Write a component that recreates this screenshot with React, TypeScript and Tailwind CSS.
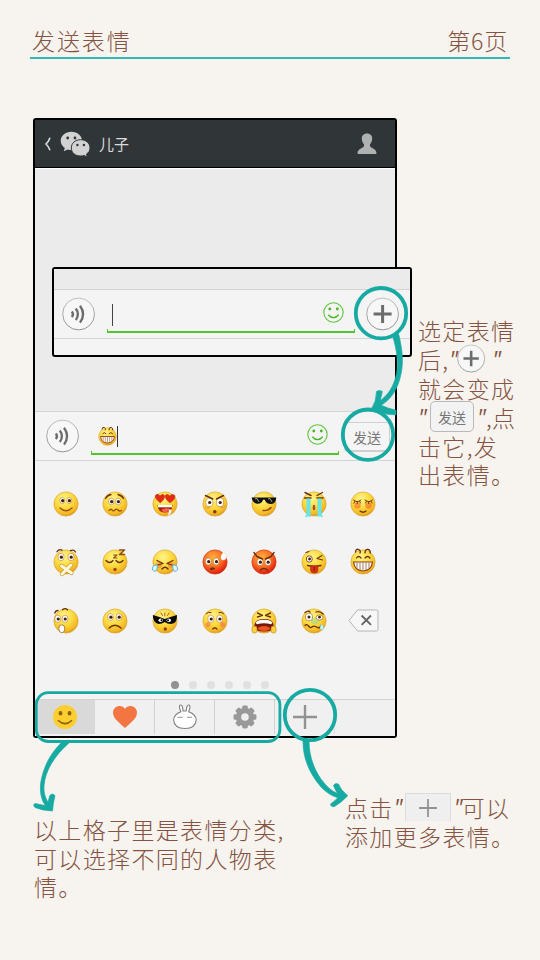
import React from "react";

const TEAL = "#17aaa3";

/* ---------- Emoji faces, drawn on a 26x26 grid ---------- */

type FaceProps = { name: string; size?: number };

const Eyes = ({ x1 = 9.3, x2 = 16.2, y = 10, r = 2.5 }) => (
  <g>
    <ellipse cx={x1} cy={y} rx={r} ry={r * 1.2} fill="#fff" stroke="#a8651a" strokeWidth="0.5" />
    <ellipse cx={x2} cy={y} rx={r} ry={r * 1.2} fill="#fff" stroke="#a8651a" strokeWidth="0.5" />
    <circle cx={x1 + 0.4} cy={y + 0.2} r="1.6" fill="#45200c" />
    <circle cx={x2 + 0.2} cy={y + 0.2} r="1.6" fill="#45200c" />
  </g>
);

const L = ({ d, c = "#6b2f0c", w = 1.3 }: { d: string; c?: string; w?: number }) => (
  <path d={d} fill="none" stroke={c} strokeWidth={w} strokeLinecap="round" strokeLinejoin="round" />
);

const features: Record<string, React.ReactNode> = {
  smile: (
    <>
      <Eyes y={9.5} />
      <L d="M7 17 Q13 22.5 19 17" c="#a04d10" w={1.2} />
    </>
  ),
  upset: (
    <>
      <Eyes y={10.5} r={2.8} />
      <L d="M3.5 7.5 Q5.5 4 9 3.5M16 3.5 Q20 4.5 21.5 7.5" />
      <L d="M7 19.5 Q8.5 17.3 10 19 T13 19 T16 19 T19.5 19.5" c="#a04d10" />
    </>
  ),
  love: (
    <>
      <path d="M8.2 11.8C-1 5 5 0.8 8 5C12 0.8 16 6 8.2 11.8Z" fill="#e42b17" stroke="#b01508" strokeWidth=".4" />
      <path d="M18 11.8C10 6 13.5 0.8 17.8 5C22 0.8 27 6 18 11.8Z" fill="#e42b17" stroke="#b01508" strokeWidth=".4" />
      <path d="M5.5 14H20.5Q20 21.5 13 21.5Q6 21.5 5.5 14Z" fill="#a3200b" />
      <path d="M6 14H20V16.3H6Z" fill="#fff" />
      <path d="M9 19Q14 16 18 18Q15.5 21.5 12 21.5Z" fill="#f4644c" />
      <path d="M17 18.5Q19.5 18 19.5 20Q19 24 15.5 25.2Q17 22 17 18.5Z" fill="#fff" stroke="#f3a15e" strokeWidth=".4" />
    </>
  ),
  stare: (
    <>
      <Eyes x1={7.3} x2={18} y={11.3} r={3.6} />
      <L d="M3.5 4.5L10.8 8M14.5 8L21.5 4.5" w={1.5} />
      <path d="M3 15.5Q5 18.5 8 16.5M19 16.5Q22 17.5 23 14.5" fill="none" stroke="#f28a43" strokeWidth="1" />
      <circle cx="12.8" cy="20.8" r="1.8" fill="#8a3510" />
    </>
  ),
  cool: (
    <>
      <path d="M.5 6.5H25.3Q25 12.8 20.2 13Q15 13 13.8 8.8H12Q11 13 6 12.8Q2 12 .5 6.5Z" fill="#101010" />
      <path d="M4 8L6 7.5L8 11M17 8L19 7.5L21 11" stroke="#d9e4e4" strokeWidth=".7" fill="none" />
      <L d="M12 19.5Q17 20 20 16.5" c="#8b410e" />
    </>
  ),
  cry: (
    <>
      <L d="M4 1.5L10 4.5M16 4.5L21.5 1.5M3.5 7H10M16 7H22" w={1.4} />
      <path d="M5.5 7.5H9.5V26Q7 25 4 26.5L5.5 22ZM16.5 7.5H20.5V22L22 26.5Q19 25 16.5 26Z" fill="#66e6ea" />
      <ellipse cx="13" cy="16.5" rx="1.3" ry="2.8" fill="#8b410e" />
      <path d="M13 15V18" stroke="#df8850" strokeWidth=".7" />
    </>
  ),
  shy: (
    <>
      <circle cx="7.5" cy="14.5" r="3.2" fill="#f4672c" opacity=".6" />
      <circle cx="18.5" cy="14.5" r="3.2" fill="#f4672c" opacity=".6" />
      <L d="M3.5 9Q7 12.5 11 9M15 9Q19 12.5 22.5 9M5 10L4 12.3M7.3 10.5V12.6M9.5 10L10.5 12M16.5 10L15.5 12M18.7 10.5V12.6M21 10L22 12" w={0.9} />
      <L d="M10 20Q13 22.5 16 20" />
    </>
  ),
  shut: (
    <>
      <Eyes x1={8} x2={18} y={8} r={3.1} />
      <L d="M4 2.7Q6 -.3 9 1.2M17.5 1.7Q21 .2 22.5 3" />
      <L d="M8.5 17L18.5 24M18 16L9 25" c="#c6952e" w={4.2} />
      <L d="M8.5 17L18.5 24M18 16L9 25" c="#fff9dc" w={3} />
    </>
  ),
  sleep: (
    <>
      <L d="M4 11.5Q7.5 15.5 11 11.5M14 11.5Q17.5 15.5 21 11.5" />
      <L d="M11.5 6H15L11.5 9H15" c="#91500e" w={1.1} />
      <L d="M17.5 1H22.5L17.5 5.5H22.5" c="#91500e" w={1.5} />
      <circle cx="13" cy="20.5" r="1.7" fill="#a04310" />
    </>
  ),
  sob: (
    <>
      <circle cx="7" cy="16" r="3" fill="#f27234" opacity=".5" />
      <circle cx="19" cy="16" r="3" fill="#f27234" opacity=".5" />
      <L d="M5 11.5L11 14.5L6 16M21 11.5L15 14.5L20 16" />
      <L d="M10 20Q13 16.5 16 20" w={1.5} />
      <path d="M5.5 16C1 16 0 18 .5 21Q3.5 24 5 20ZM20.5 16C25 16 26 18 25.5 21Q22.5 24 21 20Z" fill="#dff7ff" stroke="#45abd9" strokeWidth=".9" />
    </>
  ),
  awkward: (
    <>
      <Eyes x1={6.3} x2={14.3} y={12.5} r={2.9} />
      <L d="M8.5 20Q10.5 18 12.5 19.5Q10.5 21 8.5 20" w={1.4} />
      <path d="M21.3 3C17.5 8 18.5 11.5 22 11C25.5 10 25 6.5 21.3 3Z" fill="#fff" stroke="#ffd9ba" strokeWidth=".4" />
    </>
  ),
  angry: (
    <>
      <Eyes x1={9} x2={17} y={13} r={3} />
      <L d="M3 3.5L6 7.5L11.5 10M14.5 10L20 7.5L23 3.5" w={1.4} />
      <L d="M9.5 21Q13 18 16.5 21" w={1.5} />
    </>
  ),
  tongue: (
    <>
      <ellipse cx="8.3" cy="10" rx="3" ry="3.2" fill="#fff" stroke="#94530f" />
      <circle cx="8.6" cy="10" r="1.4" fill="#45200c" />
      <L d="M21 6.5L16 9.5L21.5 11M5 3.5L8 2.5" w={1.1} />
      <L d="M6.5 16.5Q13 18 20 16.5" />
      <path d="M9.5 17H17V21Q16.5 24.5 13.3 24Q9.7 24 9.5 21Z" fill="#d7311b" stroke="#a51b0b" strokeWidth=".5" />
      <L d="M13.2 18V21.5" c="#8d120a" w={1} />
    </>
  ),
  grin: (
    <>
      <L d="M5.5 3Q6 -1 9 .8Q11 2 10 4M15 4Q15 0 18 .4Q20.5 1 20.3 4" w={1.3} />
      <L d="M6.5 9Q8.5 6 11 9M15 9Q17.5 6 20 9" />
      <path d="M3.5 13H22.5Q21.5 21.5 13 22Q4.5 21.5 3.5 13Z" fill="#fff" stroke="#8b3c0c" strokeWidth="1.2" />
      <path d="M7 13.5V18.8M10 13.5V21M13 13.5V21.5M16 13.5V21M19 13.5V18.8" stroke="#9a6747" strokeWidth=".9" />
    </>
  ),
  scared: (
    <>
      <Eyes x1={4.8} x2={12} y={10.8} r={3} />
      <L d="M1.8 5Q2.5 2.5 5 2.5M9.5 1.7Q12 -.5 14.5 1.8" />
      <ellipse cx="8.8" cy="20.7" rx="3" ry="4" fill="#fff" stroke="#9b6519" strokeWidth=".8" />
    </>
  ),
  sad: (
    <>
      <Eyes x1={8.5} x2={17} y={9} r={2.9} />
      <L d="M7 20Q13 14.5 19 20" />
    </>
  ),
  masked: (
    <>
      <path d="M.8 7Q8 9 12.8 11Q18 9 25 7Q25.3 15.5 19 16Q15 16 12.8 14Q10 16 6.5 16Q.7 14.5 .8 7Z" fill="#0a0a0a" />
      <ellipse cx="8.7" cy="12.2" rx="2.2" ry="1.8" fill="#fff" />
      <ellipse cx="16.8" cy="12.2" rx="2.2" ry="1.8" fill="#fff" />
      <circle cx="9.5" cy="12.2" r="1" />
      <circle cx="16" cy="12.2" r="1" />
      <L d="M12.8 5V8M9 5L10.5 7.5M17 5L15.5 7.5" c="#b45a13" w={1} />
      <circle cx="13.3" cy="21" r="1.7" fill="#943c0e" />
    </>
  ),
  hurt: (
    <>
      <circle cx="6" cy="16.6" r="2.6" fill="#f4704f" opacity=".6" />
      <circle cx="20.6" cy="16.6" r="2.6" fill="#f4704f" opacity=".6" />
      <Eyes x1={8.8} x2={17.7} y={10.8} r={3.1} />
      <L d="M4.5 5.5Q6.5 3.5 9 4.5M17 4.5Q19.5 3.5 21.5 5.5" w={1} />
      <L d="M10.8 21Q12.8 18.8 14.8 21" />
    </>
  ),
  mad: (
    <>
      <L d="M6.5 5L11.5 7.3L6.5 9M19.5 5L14.5 7.3L19.5 9" w={1.4} />
      <path d="M4 15Q5.5 11 13 11Q21 11 22 15L23 19Q21 23.5 13 23.5Q4.5 23.5 3 19Z" fill="#73180a" />
      <path d="M4.5 14.8Q6 11.8 13 11.8Q20 11.8 21.5 14.8L20 16.3Q13 14 6 16.3Z" fill="#fff" />
      <ellipse cx="13" cy="20.5" rx="6" ry="2.5" fill="#ee5221" />
      <rect x="1" y="18" width="5" height="7" rx="2.3" fill="#ffd139" stroke="#c17916" strokeWidth=".6" />
      <rect x="20" y="18" width="5" height="7" rx="2.3" fill="#ffd139" stroke="#c17916" strokeWidth=".6" />
    </>
  ),
  sick: (
    <>
      <ellipse cx="14" cy="13" rx="4" ry="3.5" fill="#9bd68c" opacity=".55" />
      <ellipse cx="8" cy="9" rx="3.7" ry="3.9" fill="#fff" stroke="#8d561a" strokeWidth=".6" />
      <ellipse cx="18.5" cy="9.5" rx="3.4" ry="2.6" fill="#fff" stroke="#8d561a" strokeWidth=".6" />
      <circle cx="8" cy="9" r="1.5" fill="#45200c" />
      <circle cx="18.5" cy="9.2" r="1.4" fill="#45200c" />
      <L d="M4 4.5Q7 2 9 4M15 4Q18.5 2.5 22 6" />
      <L d="M4 17.5Q5.5 15.5 7.5 18T11 19T14.5 18.5T18 20L20 18" />
      <path d="M20.5 16C18 20 19 22 21 21.5C23.5 21 23 18.5 20.5 16Z" fill="#c5fbff" stroke="#49b8cc" strokeWidth=".4" />
    </>
  ),
};

const RED = ["awkward", "angry"];

function Face({ name, size = 26 }: FaceProps) {
  return (
    <svg width={size} height={size} viewBox="0 0 26 26" className="block overflow-visible">
      <circle
        cx="13"
        cy="13"
        r="12.1"
        fill={RED.includes(name) ? "url(#redFace)" : "url(#yellowFace)"}
        stroke={RED.includes(name) ? "#d33a13" : "#dda73a"}
        strokeWidth=".7"
      />
      {features[name]}
    </svg>
  );
}

/* ---------- Small icons ---------- */

const Gradients = () => (
  <defs>
    <radialGradient id="yellowFace" cx=".42" cy=".3" r=".75">
      <stop offset="0" stopColor="#fff58c" />
      <stop offset=".5" stopColor="#fbd93c" />
      <stop offset=".82" stopColor="#f2b624" />
      <stop offset="1" stopColor="#d08817" />
    </radialGradient>
    <radialGradient id="redFace" cx=".42" cy=".32" r=".72">
      <stop offset="0" stopColor="#ffb03a" />
      <stop offset=".5" stopColor="#fb7327" />
      <stop offset=".85" stopColor="#e92b10" />
      <stop offset="1" stopColor="#b91a08" />
    </radialGradient>
    <linearGradient id="ring" x1="0" y1="0" x2="0" y2="1">
      <stop offset="0" stopColor="#bdbdbd" />
      <stop offset="1" stopColor="#909090" />
    </linearGradient>
  </defs>
);

const Voice = () => (
  <svg width="34" height="34" viewBox="0 0 34 34" className="-mt-px block shrink-0">
    <circle cx="16.6" cy="17" r="15.9" fill="#f7f7f7" stroke="url(#ring)" strokeWidth="1" />
    <g fill="none" stroke="#6c6c6c" strokeWidth="2.3">
      <path d="M9.8 14.5Q12.2 17.2 9.8 20" />
      <path d="M13.8 11.5Q18 17.2 13.8 23" />
      <path d="M18 8.8Q24.2 17.2 18 25.6" />
    </g>
  </svg>
);

const PlusCircle = ({ size = 34 }: { size?: number }) => (
  <svg width={size} height={size} viewBox="0 0 34 34" className="-mt-px block shrink-0">
    <circle cx="16.6" cy="17" r="15.9" fill="#f7f7f7" stroke="url(#ring)" strokeWidth="1" />
    <path d="M16.6 8V26M7.6 17H25.6" stroke="#6c6c6c" strokeWidth="3" />
  </svg>
);

const GreenSmile = () => (
  <svg width="22" height="22" viewBox="0 0 22 22" className="block">
    <circle cx="10.5" cy="10.5" r="9.7" fill="none" stroke="#5cc63d" strokeWidth="1.1" />
    <circle cx="6.8" cy="7" r="1.4" fill="#43b822" />
    <circle cx="14.3" cy="7" r="1.4" fill="#43b822" />
    <path d="M5.3 12.7Q10.5 18.7 15.7 12.7" fill="none" stroke="#43b822" strokeWidth="1.3" />
  </svg>
);

function Field({ children }: { children: React.ReactNode }) {
  return (
    <div className="relative flex h-[34px] w-[248px] shrink-0 items-center">
      {children}
      <div className="absolute inset-x-0 bottom-0 h-1 border-x border-b-2 border-[#50c72e]" />
    </div>
  );
}

const Plus = ({ size, w }: { size: number; w: number }) => (
  <svg width={size} height={size} viewBox="0 0 24 24" className="block">
    <path d="M12 0V24M0 12H24" stroke="#929292" strokeWidth={w} />
  </svg>
);

const Gear = () => (
  <svg width="24" height="24" viewBox="-12 -12 24 24" className="block">
    <g fill="#999">
      {[0, 45, 90, 135].map((a) => (
        <rect key={a} x="-2.8" y="-11.4" width="5.6" height="22.8" rx="1.4" transform={`rotate(${a})`} />
      ))}
      <circle r="9.2" />
    </g>
    <circle r="3.8" fill="#efefef" />
  </svg>
);

const Rabbit = () => (
  <svg width="26" height="26" viewBox="0 0 26 26" className="-mt-px block">
    <g fill="#fff" stroke="#808080" strokeWidth="1.1">
      <path d="M8.8 7.8Q6.5 1.5 8.3 1Q10.8 .5 11 7H14.2Q14.6 .3 17 1Q19 1.6 16.7 7.8Q24 10.5 24.2 16Q23.6 24.4 13 24.5Q2.2 24.4 1.6 16Q2 10.5 8.8 7.8Z" />
      <path d="M5.5 13.3H10.5M15 13.3H20" stroke="#aaa" strokeWidth="1.2" />
    </g>
  </svg>
);

const rows = [
  ["smile", "upset", "love", "stare", "cool", "cry", "shy"],
  ["shut", "sleep", "sob", "awkward", "angry", "tongue", "grin"],
  ["scared", "sad", "masked", "hurt", "mad", "sick", "delete"],
];

const Delete = () => (
  <svg width="31" height="23" viewBox="0 0 31 23" className="block">
    <path d="M1 11.5L9.5 1H28.5Q30 1 30 2.5V20.5Q30 22 28.5 22H9.5Z" fill="#f7f7f7" stroke="#b5b5b5" />
    <path d="M13.6 6.5L23 15.9M23 6.5L13.6 15.9" stroke="#666" strokeWidth="1.9" />
  </svg>
);

/* Straight slanted quotation mark */
const Q = ({ className }: { className: string }) => (
  <span className={`inline-block shrink-0 font-['Open_Sans'] font-normal italic tracking-normal ${className}`}>"</span>
);

const Line = ({ children }: { children: React.ReactNode }) => (
  <div className="flex h-[28.8px] items-center leading-[28px] whitespace-nowrap">{children}</div>
);

function Phone() {
  return (
    <section className="flex h-[620px] w-[364px] shrink-0 flex-col rounded-[3px] border-2 border-black bg-[#ebebeb]">
      <header className="flex h-12 shrink-0 items-center border-b border-black bg-[#303538] pr-[18px] pl-[9px]">
        <svg width="8" height="14" viewBox="0 0 8 14">
          <path d="M6 .7Q4.5 4.8 2 7Q4.5 9.2 6 13.3" fill="none" stroke="#ddd" strokeWidth="1.6" />
        </svg>
        <svg width="31" height="26" viewBox="0 0 31 26" className="ml-2">
          <path d="M11.5 .7C5.3 .7 .7 4.7 .7 9.8C.7 12.7 2.3 15.2 4.8 17L3.8 20.3L7.8 18.4Q9.5 19 11.5 19C17.5 19 22 15 22 9.8C22 4.7 17.5 .7 11.5 .7Z" fill="#d2d2d2" />
          <path d="M20.6 8.7C15.2 8.7 11.3 12.2 11.3 17C11.3 21.7 15.2 25 20.6 25Q22.3 25 24 24.5L27.3 26L26.5 23.1C28.8 21.6 30 19.5 30 17C30 12.2 26 8.7 20.6 8.7Z" fill="#d2d2d2" stroke="#303538" strokeWidth="1" />
          <g fill="#303538">
            <circle cx="7.7" cy="7" r="1.4" />
            <circle cx="15" cy="7" r="1.4" />
            <circle cx="17.4" cy="14" r="1.2" />
            <circle cx="23.9" cy="14" r="1.2" />
          </g>
        </svg>
        <span className="ml-2 text-[15px] leading-none font-normal tracking-normal text-[#dcdcdc]">儿子</span>
        <svg width="20" height="22" viewBox="0 0 20 22" className="ml-auto">
          <path d="M10 .5C13.4 .5 15.4 2.8 15.2 5.8C15 8.6 14.2 10 13 11.3V13C13.7 15.3 19.5 15.5 19.5 20.2Q19.5 21 18.7 21H1.3Q.5 21 .5 20.2C.5 15.5 6.3 15.3 7 13V11.3C5.8 10 5 8.6 4.8 5.8C4.6 2.8 6.6 .5 10 .5Z" fill="#b0b2b2" />
        </svg>
      </header>

      <div className="h-[243px] shrink-0 border-t border-white" />

      <div className="flex h-[50px] shrink-0 items-center border-y border-[#d4d4d4] bg-[#f4f4f4] pl-[11px]">
        <Voice />
        <div className="ml-[11px] pt-1">
          <Field>
            <div className="-mt-[3px] ml-[7px]">
              <Face name="grin" size={19} />
            </div>
            <div className="-mt-1 h-[21px] w-px bg-[#333]" />
            <div className="-mt-1.5 mr-2.5 ml-auto">
              <GreenSmile />
            </div>
          </Field>
        </div>
        <div className="mt-0.5 ml-[5px] flex h-[30px] w-[46px] items-center justify-center rounded-[4px] border border-b-2 border-[#cfcfcf] bg-[#f5f5f5] text-sm leading-none font-normal tracking-normal text-[#777]">
          发送
        </div>
      </div>

      <div className="flex grow flex-col bg-[#f3f3f3] pt-[13.5px]">
        {rows.map((row, i) => (
          <div key={i} className="flex h-[58.6px] shrink-0 items-center pl-[6px]">
            {row.map((name) => (
              <div key={name} className="flex w-[49.6px] shrink-0 justify-center">
                {name === "delete" ? <Delete /> : <Face name={name} />}
              </div>
            ))}
          </div>
        ))}
        <div className="mt-[30.5px] flex justify-center gap-2.5 pl-[9px]">
          {[0, 1, 2, 3, 4, 5].map((i) => (
            <span key={i} className={`size-2 rounded-full ${i === 0 ? "bg-[#929292]" : "bg-[#e0e0e0]"}`} />
          ))}
        </div>
      </div>

      <nav className="flex h-[37px] shrink-0 border-t border-[#d2d2d2] bg-[#f0f0f0] pb-0.5">
        <div className="flex w-[60px] items-center justify-center bg-[#d9d9d9]">
          <svg width="24" height="24" viewBox="0 0 24 24">
            <circle cx="12" cy="12" r="12" fill="#fdce2f" />
            <ellipse cx="7.5" cy="8.2" rx="1.9" ry="2.3" fill="#876313" />
            <ellipse cx="16.5" cy="8.2" rx="1.9" ry="2.3" fill="#876313" />
            <path d="M5 15.2Q12 22 19 15.2" fill="none" stroke="#876313" strokeWidth="1.6" />
          </svg>
        </div>
        <div className="flex w-[60px] items-center justify-center border-r border-[#d2d2d2]">
          <svg width="24" height="22" viewBox="0 0 24 22">
            <path d="M12 22C7 17 0 13 0 6.5C0 .5 8.5 -2.5 12 3C15.5 -2.5 24 .5 24 6.5C24 13 17 17 12 22Z" fill="#f37542" />
          </svg>
        </div>
        <div className="flex w-[60px] items-center justify-center border-r border-[#d2d2d2]">
          <Rabbit />
        </div>
        <div className="flex w-[60px] items-center justify-center border-r border-[#d2d2d2]">
          <Gear />
        </div>
        <div className="flex w-[60px] items-center justify-center border-r border-[#dedede]">
          <Plus size={24} w={2.4} />
        </div>
      </nav>
    </section>
  );
}

/* Enlarged input bar laid over the chat window */
function Callout() {
  return (
    <div className="absolute top-[267px] left-[52px] flex h-[90px] w-[360px] flex-col rounded-[3px] border-2 border-black bg-[#f4f4f4]">
      <div className="h-5 shrink-0 bg-[#ebebeb]" />
      <div className="flex h-[50px] shrink-0 items-center border-y border-[#d4d4d4] pl-[7.5px]">
        <Voice />
        <div className="ml-[11px] pt-1">
          <Field>
            <div className="-mt-0.5 ml-[5px] h-[22px] w-px bg-[#444]" />
            <div className="-mt-1.5 mr-2.5 ml-auto">
              <GreenSmile />
            </div>
          </Field>
        </div>
        <div className="ml-[11px]">
          <PlusCircle />
        </div>
      </div>
    </div>
  );
}

const Arrows = () => (
  <svg width="540" height="960" viewBox="0 0 540 960" className="pointer-events-none absolute top-0 left-0">
    <Gradients />
    <g fill="none" stroke={TEAL} strokeWidth="3.8">
      <circle cx="381" cy="313.2" r="25.2" />
      <circle cx="368" cy="434.7" r="25.2" />
      <circle cx="310" cy="715" r="25.2" />
      <rect x="36.3" y="692.7" width="243.6" height="48.8" rx="12" strokeWidth="2.8" />
    </g>
    <g fill={TEAL} stroke={TEAL} strokeWidth=".7" strokeLinejoin="round">
      <path d="M392.5 335.5L398.5 333.5C403 352 404 365 399.5 380C395.5 394 387 403 376 408L374 404.5C385 399 392 390 395.5 378C399 366 397.5 352 392.5 335.5Z" />
      <path d="M376.5 391.5Q379.5 389.5 382.3 391.5L379.3 404.5Q388 408.5 396 410.3V414.8Q383 415 371.5 408.8Q376.5 401 376.5 391.5Z" />
      <path d="M62 742H70C54 756 45 771 44 786C43.5 794 46 801 52 807L48 809C41 801 39.3 792 41 781C44 766 50 754 62 742Z" />
      <path d="M33.8 804.5Q35 803 37.5 804L47 806L49.8 795.5Q52 792.5 55 795.5Q53 803 52.5 811Q42 810.5 35 807.5Q33.5 806 33.8 804.5Z" />
      <path d="M303 741H309C309 757 315 773 325 784C330 790 336 794 343 794.5L342 798C334 798 327 793 321 787C309 773 303 758 303 741Z" />
      <path d="M333.5 785.5Q335 782.5 338.5 784Q340.5 790 347.8 795.7Q342 802 334.5 806.5Q331 807.5 330.5 804Q335 801 339.3 796.2Q335.5 791 333.5 785.5Z" />
    </g>
  </svg>
);

export default function App() {
  return (
    <main className="relative h-[960px] w-[540px] overflow-hidden bg-[#f7f4ef] font-['Noto_Sans_CJK_SC',sans-serif] text-[23px] font-light tracking-[1.35px] text-[#845341]">
      <header className="mx-[30px] flex h-[59px] items-end justify-between border-b-2 border-[#35b8b1] px-0.5 pb-[3px]">
        <h1 className="leading-[28px] tracking-[1.9px]">发送表情</h1>
        <span className="leading-[28px] tracking-[0.8px]">第6页</span>
      </header>

      <div className="mt-[59px] flex pl-[33px]">
        <Phone />
        <aside className="ml-[21px] pt-[198px]">
          <Line>选定表情</Line>
          <Line>
            后
            <span className="w-[7px]">,</span>
            <Q className="w-[8px]" />
            <span className="block">
              <PlusCircle size={29} />
            </span>
            <Q className="ml-1.5 w-[8px]" />
          </Line>
          <Line>就会变成</Line>
          <Line>
            <Q className="w-[12px]" />
            <span className="flex h-[31px] w-[44px] shrink-0 items-center justify-center rounded-[5px] border border-[#b9b9b9] bg-[#f3f3f3] text-sm leading-none font-normal tracking-normal text-[#777]">
              发送
            </span>
            <Q className="ml-[3px] w-[9px]" />
            <span className="w-[6px]">,</span>点
          </Line>
          <Line>
            击它<span className="w-[7px]">,</span>发
          </Line>
          <Line>出表情。</Line>
        </aside>
      </div>

      <div className="flex pl-[34px]">
        <div className="w-[270px] pt-[76.5px]">
          <Line>以上格子里是表情分类,</Line>
          <Line>可以选择不同的人物表</Line>
          <Line>情。</Line>
        </div>
        <div className="ml-[41px] pt-[55px]">
          <Line>
            点击
            <Q className="w-[11px]" />
            <span className="flex h-7 w-[46px] shrink-0 items-center justify-center border border-b-0 border-[#dcdcdc] bg-[#efefef]">
              <Plus size={18} w={2.4} />
            </span>
            <Q className="ml-[3px] w-[8px]" />
            可以
          </Line>
          <Line>添加更多表情。</Line>
        </div>
      </div>

      <Callout />
      <Arrows />
    </main>
  );
}
